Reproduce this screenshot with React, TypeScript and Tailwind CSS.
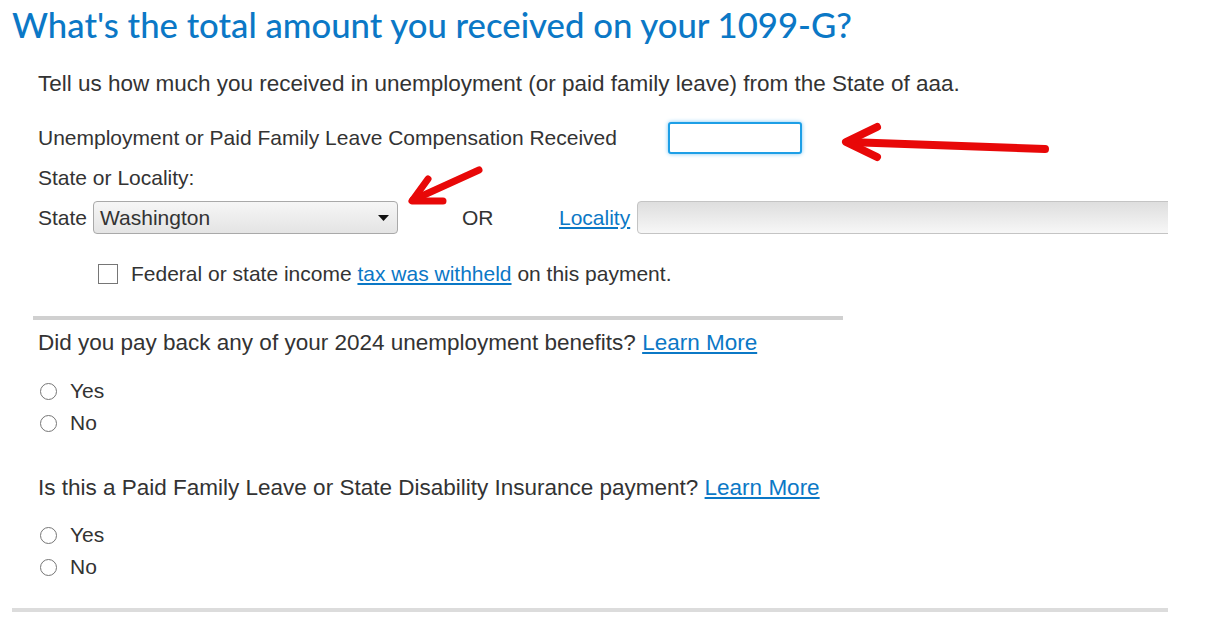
import React from "react";

function Radio({ label }: { label: string }) {
  return (
    <label className="flex h-[32px] items-center">
      <span className="ml-[2px] inline-block h-[17px] w-[17px] rounded-full border border-[#767676] bg-white" />
      <span className="ml-[13px] text-[21px]">{label}</span>
    </label>
  );
}

function Arrows() {
  return (
    <svg className="pointer-events-none absolute left-0 top-0" width="1230" height="621">
      <g stroke="#e80808" strokeWidth="8" strokeLinecap="round" strokeLinejoin="round" fill="none">
        <path d="M1045 149 L848 142" />
        <path d="M877 127 L846 142 L877 157" />
      </g>
      <g stroke="#e80808" strokeWidth="7" strokeLinecap="round" strokeLinejoin="round" fill="none">
        <path d="M479 170 L413 200" />
        <path d="M428 179 L412 201 L443 201" />
      </g>
    </svg>
  );
}

export default function App() {
  return (
    <div className="relative h-[621px] w-[1230px] overflow-hidden bg-white font-['Liberation_Sans',Arial,sans-serif] text-[22.5px] text-[#333]">
      <div className="w-[1168px] overflow-hidden">
        <h1 className="ml-[12px] mt-[4px] font-['Lato','Noto_Sans',sans-serif] text-[34.7px] font-medium leading-[42px] text-[#0b78c6]">
          What's the total amount you received on your 1099-G?
        </h1>

        <div className="ml-[38px]">
          <p className="mt-[24px] leading-[28px]">
            Tell us how much you received in unemployment (or paid family leave) from the State of aaa.
          </p>

          <div className="mt-[24px] flex h-[32px] items-center">
            <span className="w-[630px] shrink-0 text-[21px]">Unemployment or Paid Family Leave Compensation Received</span>
            <input
              className="h-[32px] w-[134px] shrink-0 rounded-[3px] border-2 border-[#1d9fe6] bg-white shadow-[0_0_4px_#7cc6f2] outline-none"
              aria-label="Compensation received"
            />
          </div>

          <p className="mt-[12px] text-[21px] leading-[24px]">State or Locality:</p>

          <div className="mt-[11px] flex h-[33px] items-center text-[21px]">
            <span className="w-[55px] shrink-0">State</span>
            <div className="flex h-[33px] w-[305px] shrink-0 items-center justify-between rounded-[4px] border border-[#a9a9a9] bg-gradient-to-b from-[#f6f6f6] to-[#e4e4e4] pl-[6px] pr-[8px]">
              <span>Washington</span>
              <svg width="11" height="6" viewBox="0 0 11 6">
                <path d="M0 0 H11 L5.5 6 Z" fill="#111" />
              </svg>
            </div>
            <span className="ml-[64px] w-[97px] shrink-0">OR</span>
            <a href="#" className="w-[71px] shrink-0 text-[#0b78c6] underline">Locality</a>
            <div className="ml-[7px] h-[33px] w-[600px] shrink-0 rounded-[4px] border border-[#c4c4c4] bg-gradient-to-b from-[#dedede] to-[#f7f7f7]" />
          </div>

          <label className="ml-[60px] mt-[28px] flex h-[24px] items-center">
            <span className="inline-block h-[20px] w-[20px] border border-[#767676] bg-white" />
            <span className="ml-[13px] text-[21px] leading-[24px]">
              Federal or state income{" "}
              <a href="#" className="text-[#0b78c6] underline">tax was withheld</a>{" "}
              on this payment.
            </span>
          </label>
        </div>

        <div className="ml-[33px] mt-[30px] h-[4px] w-[810px] bg-[#d0d0d0]" />

        <div className="ml-[38px]">
          <p className="mt-[9px] leading-[28px]">
            Did you pay back any of your 2024 unemployment benefits?{" "}
            <a href="#" className="text-[#0b78c6] underline">Learn More</a>
          </p>
          <div className="mt-[18px]">
            <Radio label="Yes" />
            <Radio label="No" />
          </div>

          <p className="mt-[35px] leading-[28px]">
            Is this a Paid Family Leave or State Disability Insurance payment?{" "}
            <a href="#" className="text-[#0b78c6] underline">Learn More</a>
          </p>
          <div className="mt-[17px]">
            <Radio label="Yes" />
            <Radio label="No" />
          </div>
        </div>

        <div className="ml-[12px] mt-[25px] h-[4px] w-[1156px] bg-[#dcdcdc]" />
      </div>
      <Arrows />
    </div>
  );
}
